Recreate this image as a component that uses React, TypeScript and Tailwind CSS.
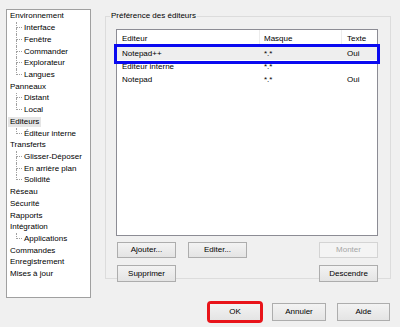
import React from "react";

type Node = { label: string; children?: string[]; selected?: boolean };

const tree: Node[] = [
  { label: "Environnement", children: ["Interface", "Fenêtre", "Commander", "Explorateur", "Langues"] },
  { label: "Panneaux", children: ["Distant", "Local"] },
  { label: "Editeurs", children: ["Éditeur interne"], selected: true },
  { label: "Transferts", children: ["Glisser-Déposer", "En arrière plan", "Solidité"] },
  { label: "Réseau" },
  { label: "Sécurité" },
  { label: "Rapports" },
  { label: "Intégration", children: ["Applications"] },
  { label: "Commandes" },
  { label: "Enregistrement" },
  { label: "Mises à jour" },
];

const rows = [
  { name: "Notepad++", mask: "*.*", text: "Oui" },
  { name: "Editeur interne", mask: "*.*", text: "" },
  { name: "Notepad", mask: "*.*", text: "Oui" },
];

function Btn({ children, disabled, className = "" }: { children: React.ReactNode; disabled?: boolean; className?: string }) {
  return (
    <div
      className={
        "flex items-center justify-center border text-[8px] leading-none " +
        (disabled
          ? "border-[#d4d4d4] bg-[#f4f4f4] text-[#a6a6a6] "
          : "border-[#adadad] bg-gradient-to-b from-[#f3f3f3] to-[#e4e4e4] text-[#000] ") +
        className
      }
    >
      {children}
    </div>
  );
}

function TreeChild({ label, last }: { label: string; last: boolean }) {
  return (
    <div className="flex h-[11.72px] items-stretch">
      <div className="ml-[9px] flex w-[6px] flex-col">
        <div className="h-1/2 border-b border-l border-dotted border-[#a0a0a0]" />
        <div className={"h-1/2 " + (last ? "" : "border-l border-dotted border-[#a0a0a0]")} />
      </div>
      <span className="ml-[2px] flex items-center whitespace-nowrap">{label}</span>
    </div>
  );
}

export default function App() {
  return (
    <div
      className="relative h-[327px] w-[400px] overflow-hidden bg-[#f0f0f0] text-[8px] text-[#000]"
      style={{ fontFamily: '"Liberation Sans", Arial, sans-serif' }}
    >
      <div className="flex">
        {/* arbre des options */}
        <div className="ml-[6px] mt-[9px] h-[289px] w-[85px] border border-[#a0a0a0] bg-white pt-[0.5px]">
          {tree.map((n) => (
            <div key={n.label}>
              <div className="flex h-[11.72px] items-center pl-[1px]">
                <span className={"px-[2px] leading-[10px] " + (n.selected ? "bg-[#e5e5e5]" : "")}>{n.label}</span>
              </div>
              {n.children?.map((c, i) => (
                <TreeChild key={c} label={c} last={i === n.children!.length - 1} />
              ))}
            </div>
          ))}
        </div>

        {/* groupe préférence */}
        <fieldset className="ml-[14px] mt-[10px] h-[269px] w-[286px] border border-[#dcdcdc] px-[10px]">
          <legend className="ml-[-6px] px-[1px] leading-[12px]">Préférence des éditeurs</legend>
          <div className="relative mt-[7px] h-[207px] w-[262px] border border-[#8c8c94] bg-white">
            <div className="flex h-[17px]">
              <div className="flex w-[143px] items-center border-r border-[#ececec] pl-[5px]">Editeur</div>
              <div className="flex w-[82px] items-center border-r border-[#ececec] pl-[4px]">Masque</div>
              <div className="flex flex-1 items-center pl-[5px]">Texte</div>
            </div>
            {rows.map((r, i) => (
              <div key={r.name} className={"flex h-[13px] items-center " + (i === 0 ? "bg-[#eeeeee]" : "")}>
                <div className="w-[143px] pl-[5px]">{r.name}</div>
                <div className="w-[82px] pl-[4px]">{r.mask}</div>
                <div className="flex-1 pl-[5px]">{r.text}</div>
              </div>
            ))}
            <div className="absolute left-[-3px] top-[14px] h-[20px] w-[266px] border-[3px] border-[#0a0af0]" />
          </div>
          <div className="mt-[6px] flex w-[262px] pl-[1px]">
            <Btn className="h-[16px] w-[59px]">Ajouter...</Btn>
            <Btn className="ml-[12px] h-[16px] w-[59px]">Editer...</Btn>
            <Btn disabled className="ml-auto h-[16px] w-[59px]">Monter</Btn>
          </div>
          <div className="mt-[7px] flex w-[262px] pl-[1px]">
            <Btn className="h-[17px] w-[59px]">Supprimer</Btn>
            <Btn className="ml-auto h-[17px] w-[59px]">Descendre</Btn>
          </div>
        </fieldset>
      </div>

      {/* boutons du bas */}
      <div className="mt-[3px] flex items-center justify-end pr-[10px]">
        <div className="flex h-[22px] w-[56px] rounded-[4px] border-[3px] border-[#e8141a]">
          <Btn className="flex-1 border-0">OK</Btn>
        </div>
        <Btn className="ml-[9px] h-[18px] w-[54px]">Annuler</Btn>
        <Btn className="ml-[11px] h-[18px] w-[53px]">Aide</Btn>
      </div>
    </div>
  );
}
